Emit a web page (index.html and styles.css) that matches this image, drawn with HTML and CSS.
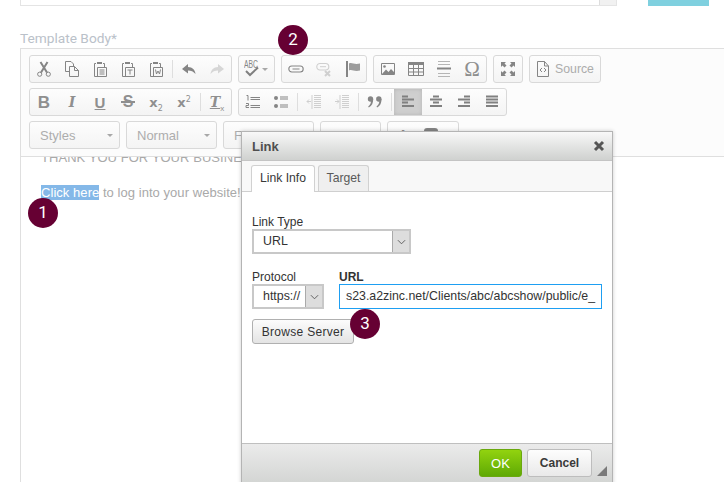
FILE: index.html
```html
<!DOCTYPE html>
<html lang="en">
<head>
<meta charset="utf-8">
<title>Template Body</title>
<link rel="stylesheet" href="styles.css">
</head>
<body>
<div class="page">
  <div class="top-strip">
    <div class="top-box"><span class="top-scroll"></span></div>
    <div class="top-action"></div>
  </div>
  <label class="field-label">Template Body*</label>
  <div class="editor">
    <div class="toolbar">
      <div class="tb-row">
        <div class="group">
          <span class="btn"><svg class="ico" viewBox="0 0 16 16"><circle cx="3.7" cy="13.2" r="2.1"/><circle cx="12.3" cy="13.2" r="2.1"/><path class="thick" d="M5 11.500 11.500 1M11 11.500 4.500 1"/></svg></span>
          <span class="btn"><svg class="ico" viewBox="0 0 16 16"><path d="M5 10.500H1.500V.5H7L9.500 3V5"/><path d="M5.500 5.500H10.500L14.500 9.500V15.500H5.500Z"/><path d="M10.500 5.500V9.500H14.500"/></svg></span>
          <span class="btn"><svg class="ico" viewBox="0 0 16 16"><path d="M4 2.500H2.500V15.500H6"/><path d="M11 2.500H12.500V6.500"/><path class="thick" d="M5 2H10"/><path d="M5.500 6.500H14.500V15.500H5.500ZM7.500 9H12.500M7.500 11H12.500M7.500 13H12.500"/></svg></span>
          <span class="btn"><svg class="ico" viewBox="0 0 16 16"><path d="M4 2.500H2.500V15.500H6"/><path d="M11 2.500H12.500V6.500"/><path class="thick" d="M5 2H10"/><path d="M5.500 6.500H14.500V15.500H5.500ZM7.500 9H12.500M10 9V13.500"/></svg></span>
          <span class="btn"><svg class="ico" viewBox="0 0 16 16"><path d="M4 2.500H2.500V15.500H6"/><path d="M11 2.500H12.500V6.500"/><path class="thick" d="M5 2H10"/><path d="M5.500 6.500H14.500V15.500H5.500ZM7.500 8.500 8.500 13 10 10 11.500 13 12.500 8.500"/></svg></span>
          <span class="sep"></span>
          <span class="btn"><svg class="ico solid" viewBox="0 0 16 16"><path d="M7 3 1 8 7 12.500V9.500C10 9.500 12.500 10.500 14.500 13 14 9 11.500 6 7 6Z"/></svg></span>
          <span class="btn"><svg class="ico solid off" viewBox="0 0 16 16"><path d="M9 3 15 8 9 12.500V9.500C6 9.500 3.500 10.500 1.500 13 2 9 4.500 6 9 6Z"/></svg></span>
        </div>
        <div class="group">
          <span class="btn btn-spell"><svg class="ico-spell" viewBox="0 0 17 18"><text class="spell-text" transform="scale(1 1.400)" x="0" y="6" textLength="14" lengthAdjust="spacingAndGlyphs">ABC</text><path class="spell-check" d="M2 11 6 15 14 7.500"/></svg><i class="caret"></i></span>
        </div>
        <div class="group">
          <span class="btn"><svg class="ico" viewBox="0 0 16 16"><rect class="link-ring" x=".8" y="5" width="14.400" height="6" rx="3"/><path class="link-bar" d="M4.500 8H11.500"/></svg></span>
          <span class="btn"><svg class="ico off" viewBox="0 0 16 16"><rect class="link-ring" x=".8" y="2.500" width="12" height="6.500" rx="3.200"/><path d="M4 5.700H10"/><path class="thick" d="M9 10 14 15M14 10 9 15"/></svg></span>
          <span class="btn"><svg class="ico" viewBox="0 0 16 16"><path class="thick" d="M3 0V16"/><path class="flag" d="M5 2.500C8 1 10 4 16 2.500V9.500C10 11 8 8 5 9.500Z"/></svg></span>
        </div>
        <div class="group">
          <span class="btn"><svg class="ico" viewBox="0 0 16 16"><path d="M1.500 2.500H14.500V13.500H1.500Z"/><path class="fill" d="M2 13 6 8.500 8.500 11 11 8 14 11V13Z"/><circle class="fill" cx="4.500" cy="5.500" r="1.300"/></svg></span>
          <span class="btn"><svg class="ico" viewBox="0 0 16 16"><path class="fill" d="M0 1H16V4H0Z"/><path d="M.5 4V14.500H15.500V4M.5 7.500H15.500M.5 11H15.500M5.500 4V14.500M10.500 4V14.500"/></svg></span>
          <span class="btn"><svg class="ico ico-rule" viewBox="0 0 16 16"><path d="M2 .5H14M2 3.500H14M2 12.500H14M2 15.500H14"/><path class="rule" d="M1 7.500H15"/></svg></span>
          <span class="btn glyph glyph-omega">Ω</span>
        </div>
        <div class="group">
          <span class="btn"><svg class="ico solid" viewBox="0 0 16 16"><path d="M1 1H6L4.500 2.500 6.500 4.500 4.500 6.500 2.500 4.500 1 6ZM15 1V6L13.500 4.500 11.500 6.500 9.500 4.500 11.500 2.500 10 1ZM1 15V10L2.500 11.500 4.500 9.500 6.500 11.500 4.500 13.500 6 15ZM15 15H10L11.500 13.500 9.500 11.500 11.500 9.500 13.500 11.500 15 10Z"/></svg></span>
        </div>
        <div class="group">
          <span class="btn btn-source"><svg class="ico" viewBox="0 0 16 16"><path d="M2.500.5H9.500L13.500 5V15.500H2.500Z"/><path d="M9.500.5V5H13.500"/><path d="M7 7 5 9 7 11M9 7 11 9 9 11"/></svg><span class="source-text">Source</span></span>
        </div>
      </div>
      <div class="tb-row">
        <div class="group">
          <span class="btn glyph glyph-b">B</span>
          <span class="btn glyph glyph-i">I</span>
          <span class="btn glyph glyph-u">U</span>
          <span class="btn glyph"><span class="glyph-s">S</span></span>
          <span class="btn glyph"><span class="glyph-x">x<sub>2</sub></span></span>
          <span class="btn glyph"><span class="glyph-x">x<sup>2</sup></span></span>
          <span class="sep"></span>
          <span class="btn glyph"><span class="glyph-tx"><span class="tx-t">T</span><sub>x</sub></span></span>
        </div>
        <div class="group">
          <span class="btn"><svg class="ico" viewBox="0 0 16 16"><path d="M5.500 3.500H15M5.500 5.500H15M5.500 11.500H15M5.500 13.500H15M1.500 1.500H3V6.500M1 9.500H3.500V11.500H1V13.500H4"/></svg></span>
          <span class="btn"><svg class="ico" viewBox="0 0 16 16"><circle class="fill" cx="3" cy="4" r="2"/><circle class="fill" cx="3" cy="12" r="2"/><path d="M7 3H15M7 5H15M7 11H15M7 13H15"/></svg></span>
          <span class="sep"></span>
          <span class="btn"><svg class="ico off" viewBox="0 0 16 16"><path d="M8 1.500H15M8 3.500H15M8 5.500H15M8 7.500H15M8 9.500H15M8 11.500H15M8 13.500H15M6 1V15"/><path d="M5 7.500H1M3 5.500 1 7.500 3 9.500"/></svg></span>
          <span class="btn"><svg class="ico off" viewBox="0 0 16 16"><path d="M8 1.500H15M8 3.500H15M8 5.500H15M8 7.500H15M8 9.500H15M8 11.500H15M8 13.500H15M6 1V15"/><path d="M1 7.500H5M3 5.500 5 7.500 3 9.500"/></svg></span>
          <span class="sep"></span>
          <span class="btn"><svg class="ico solid" viewBox="0 0 16 16"><circle cx="3.500" cy="5" r="2.700"/><path d="M4 5H6.200C6.200 9 5 12 1.800 13.500L1.200 12.500C3.200 11 4 9 4 7Z"/><circle cx="11.800" cy="5" r="2.700"/><path d="M12.300 5H14.500C14.500 9 13.300 12 10.100 13.500L9.500 12.500C11.500 11 12.300 9 12.300 7Z"/></svg></span>
          <span class="sep"></span>
          <span class="btn btn-on"><svg class="ico ico-bars" viewBox="0 0 16 16"><path d="M2 2.500H8M2 5.500H14M2 8.500H8M2 12H14"/></svg></span>
          <span class="btn"><svg class="ico ico-bars" viewBox="0 0 16 16"><path d="M5 2.500H11M2 5.500H14M5 8.500H11M2 12H14"/></svg></span>
          <span class="btn"><svg class="ico ico-bars" viewBox="0 0 16 16"><path d="M8 2.500H14M2 5.500H14M8 8.500H14M2 12H14"/></svg></span>
          <span class="btn"><svg class="ico ico-bars" viewBox="0 0 16 16"><path d="M2 2.500H14M2 5.500H14M2 8.500H14M2 12H14"/></svg></span>
        </div>
      </div>
      <div class="tb-row">
        <div class="combo combo-lg"><span class="combo-text">Styles</span><i class="caret"></i></div>
        <div class="combo combo-lg"><span class="combo-text">Normal</span><i class="caret"></i></div>
        <div class="combo combo-lg"><span class="combo-text">Font</span><i class="caret"></i></div>
        <div class="combo combo-sm"><span class="combo-text">Size</span><i class="caret"></i></div>
        <div class="group group-color">
          <span class="btn glyph color-a">A</span>
          <span class="btn"><svg class="ico solid" viewBox="0 0 16 16"><rect x="1" y="1" width="14" height="14" rx="3"/></svg></span>
        </div>
      </div>
    </div>
    <div class="content">
      <p class="content-line content-first">THANK YOU FOR YOUR BUSINESS!</p>
      <p class="content-line"><span class="selected">Click here</span> to log into your website!</p>
    </div>
  </div>

  <div class="dialog">
    <div class="dlg-title"><span>Link</span><svg class="dlg-close" viewBox="0 0 12 12"><path d="M2 2 10 10M10 2 2 10"/></svg></div>
    <div class="dlg-tabs">
      <span class="tab tab-on">Link Info</span>
      <span class="tab tab-off">Target</span>
    </div>
    <div class="dlg-body">
      <div class="fld fld-type">
        <label class="dlg-label">Link Type</label>
        <div class="select select-type"><span class="select-val">URL</span><span class="select-arrow"><svg viewBox="0 0 10 6" class="chev"><path d="M1 1 5 5 9 1"/></svg></span></div>
      </div>
      <div class="url-row">
        <div class="fld">
          <label class="dlg-label">Protocol</label>
          <div class="select select-proto"><span class="select-val">https://</span><span class="select-arrow"><svg viewBox="0 0 10 6" class="chev"><path d="M1 1 5 5 9 1"/></svg></span></div>
        </div>
        <div class="fld fld-url">
          <label class="dlg-label dlg-label-b">URL</label>
          <div class="url-input">s23.a2zinc.net/Clients/abc/abcshow/public/e_</div>
        </div>
      </div>
      <button class="browse" type="button">Browse Server</button>
    </div>
    <div class="dlg-foot">
      <button class="ok" type="button">OK</button>
      <button class="cancel" type="button">Cancel</button>
      <i class="resizer"></i>
    </div>
  </div>

  <span class="marker marker-1">1</span>
  <span class="marker marker-2">2</span>
  <span class="marker marker-3">3</span>
</div>
</body>
</html>
```
FILE: styles.css
```css
* { box-sizing: border-box; }
html, body { margin: 0; padding: 0; background: #fff; }
body { width: 724px; height: 482px; overflow: hidden; font-family: "Liberation Sans", Arial, sans-serif; }
.page { position: relative; width: 724px; height: 482px; overflow: hidden; padding-left: 20px; }

.top-strip { display: flex; height: 6px; }
.top-box { width: 597px; height: 6px; border: 1px solid #e4e4e4; border-top: 0; display: flex; justify-content: flex-end; }
.top-scroll { width: 17px; height: 5px; background: #f1f1f1; border-left: 1px solid #ddd; }
.top-action { width: 61px; height: 6px; margin-left: 31px; background: #7fd0df; }

.field-label { display: block; margin-top: 24px; height: 18px; font-size: 13.700px; line-height: 17px; color: #bac1c9; font-family: Roboto, "Liberation Sans", sans-serif; font-weight: 400; }

.editor { width: 740px; height: 440px; border: 1px solid #dfdfdf; border-right: 0; }
.toolbar { height: 108px; padding: 6px 0 0 8px; background: #fcfcfc; border-bottom: 1px solid #dfdfdf; display: flex; flex-direction: column; gap: 5px; }
.tb-row { display: flex; gap: 6px; height: 28px; }
.group { display: flex; height: 28px; border: 1px solid #d9d9d9; border-radius: 3px; background: linear-gradient(#fdfdfd, #f4f4f4); overflow: hidden; }
.btn { width: 28px; height: 26px; display: flex; align-items: center; justify-content: center; flex: none; }
.sep { width: 1px; height: 18px; margin: 4px 2px; background: #dedede; flex: none; }
.btn-on { background: #cfcfcf; box-shadow: inset 0 0 4px #b5b5b5; }
.btn-spell { width: 35px; gap: 1px; padding-left: 5px; justify-content: flex-start; }
.btn-source { width: 70px; justify-content: flex-start; padding-left: 5px; gap: 4px; }
.source-text { font-size: 12.300px; color: #acacac; }

.ico { width: 16px; height: 16px; fill: none; stroke: #858585; stroke-width: 1; display: block; }
.ico .thick { stroke-width: 2; }
.ico .fill { fill: #858585; stroke: none; }
.ico .flag { fill: #9c9c9c; stroke: none; }
.ico .link-ring { stroke-width: 1.100; }
.ico .link-bar { stroke-width: 1.200; }
.ico.solid { fill: #858585; stroke: none; }
.ico.off { stroke: #cfcfcf; }
.ico.solid.off { fill: #d6d6d6; stroke: none; }
.ico-rule { stroke: #b5b5b5; }
.ico-rule .rule { stroke: #858585; stroke-width: 2; }
.ico-bars { stroke: #808080; stroke-width: 2; }
.ico-spell { width: 17px; height: 18px; display: block; flex: none; }
.spell-text { font-family: "Liberation Sans", sans-serif; font-size: 8px; fill: #858585; }
.spell-check { fill: none; stroke: #808080; stroke-width: 2; }
.caret { width: 0; height: 0; border: 3px solid transparent; border-top: 3px solid #a8a8a8; border-bottom: 0; display: block; flex: none; }

.glyph { color: #8f8f8f; font-size: 15px; line-height: 1; font-weight: 700; }
.glyph sub, .glyph sup { font-size: 8px; line-height: 0; font-weight: 400; }
.glyph-b { font-size: 17px; }
.glyph-i { font-size: 14px; font-style: italic; font-family: "DejaVu Serif", serif; }
.glyph-u { font-size: 15px; text-decoration: underline; }
.glyph-s { font-size: 16px; padding: 0 2px; background: linear-gradient(#8f8f8f, #8f8f8f) center / 100% 2px no-repeat; }
.glyph-omega { font-size: 21px; font-weight: 400; font-family: "Liberation Serif", serif; }
.glyph-x { font-size: 13px; font-family: "DejaVu Sans", sans-serif; }
.glyph-tx { font-size: 14px; }
.tx-t { font-style: italic; font-family: "DejaVu Serif", serif; text-decoration: underline; }
.color-a { font-size: 12px; }

.combo { height: 28px; border: 1px solid #d9d9d9; border-radius: 3px; background: linear-gradient(#fdfdfd, #f4f4f4); display: flex; align-items: center; justify-content: space-between; padding: 0 6px 0 10px; }
.combo-lg { width: 91px; }
.combo-sm { width: 61px; }
.combo-text { font-size: 13px; color: #adadad; }
.group-color { width: 72px; padding-left: 1px; }

.content { height: 320px; overflow: hidden; background: #fff; padding-left: 20px; }
.content-line { margin: 0; font-size: 13px; line-height: 20px; color: #a9a9a9; letter-spacing: .05px; white-space: nowrap; }
.content-first { margin-top: -9px; margin-bottom: 15px; }
.selected { background: #84b8e8; color: #fff; }

.dialog { position: absolute; left: 241px; top: 131px; width: 372px; height: 360px; border: 1px solid #b4b4b4; background: #fff; box-shadow: 0 0 4px rgba(0, 0, 0, .2); display: flex; flex-direction: column; }
.dlg-title { height: 29px; flex: none; display: flex; justify-content: space-between; align-items: center; padding: 0 7px 0 10px; background: linear-gradient(#f8f8f8, #cfd1cf); border-bottom: 1px solid #c4c4c4; font-size: 13px; font-weight: 700; color: #4f4f4f; }
.dlg-close { width: 12px; height: 12px; fill: none; stroke: #555; stroke-width: 3; display: block; }
.dlg-tabs { height: 31px; flex: none; display: flex; align-items: flex-end; gap: 3px; padding-left: 9px; background: #f8f8f8; border-bottom: 1px solid #cfcfcf; }
.tab { height: 26px; text-align: center; line-height: 24px; font-size: 12.200px; color: #595959; background: #efefef; border: 1px solid #d1d1d1; border-bottom: 0; border-radius: 3px 3px 0 0; }
.tab-on { width: 64px; height: 27px; margin-bottom: -1px; background: #fff; color: #383838; }
.tab-off { width: 51px; }
.dlg-body { flex: 1; padding: 23px 10px 0; font-size: 12px; color: #303030; }
.fld { display: flex; flex-direction: column; }
.dlg-label { height: 14px; line-height: 14px; font-size: 12px; color: #333; }
.dlg-label-b { font-weight: 700; }
.select { height: 25px; display: flex; justify-content: space-between; border: 2px solid #c8c8c8; background: #fff; font-size: 12.400px; }
.select-val { padding-left: 9px; line-height: 21px; color: #333; }
.select-arrow { width: 17px; background: #dddddd; border-left: 1px solid #aaa; display: flex; align-items: center; justify-content: center; }
.chev { width: 9px; height: 6px; fill: none; stroke: #555; stroke-width: 1; }
.select-type { width: 159px; }
.select-proto { width: 72px; }
.url-row { display: flex; gap: 15px; margin-top: 16px; }
.fld-url { width: 263px; }
.url-input { height: 25px; border: 1px solid #1e9ff2; padding-left: 6px; line-height: 23px; font-size: 12.350px; color: #333; white-space: nowrap; overflow: hidden; }
.browse { display: block; width: 102px; height: 25px; margin-top: 10px; padding: 0; font: 12px "Liberation Sans", sans-serif; color: #333; border: 1px solid #b0b0b0; border-radius: 3px; background: linear-gradient(#fcfcfc, #e4e4e4); letter-spacing: .3px; }
.dlg-foot { height: 47px; flex: none; position: relative; display: flex; gap: 5px; padding: 5px 0 0 237px; background: linear-gradient(#ebebeb, #cfd1cf); border-top: 1px solid #bfbfbf; }
.ok, .cancel { height: 28px; padding: 0; border-radius: 3px; font: 700 12px "Liberation Sans", sans-serif; }
.ok { width: 43px; color: #fff; background: linear-gradient(#92d30f, #5fa904); border: 1px solid #6aa80e; font-weight: 400; font-size: 13px; }
.cancel { width: 65px; color: #3a3a3a; background: linear-gradient(#fdfdfd, #e9e9e9); border: 1px solid #bdbdbd; }
.resizer { position: absolute; left: 355px; top: 22px; width: 0; height: 0; border-style: solid; border-width: 0 0 10px 10px; border-color: transparent transparent #7a7a7a transparent; }

.marker { position: absolute; width: 30px; height: 30px; border-radius: 50%; background: #660033; color: #fff; font-size: 17px; line-height: 29px; text-align: center; font-family: Roboto, "Liberation Sans", sans-serif; font-weight: 400; }
.marker-1 { left: 28px; top: 198px; }
.marker-2 { left: 278px; top: 25px; }
.marker-3 { left: 350px; top: 309px; }
```
